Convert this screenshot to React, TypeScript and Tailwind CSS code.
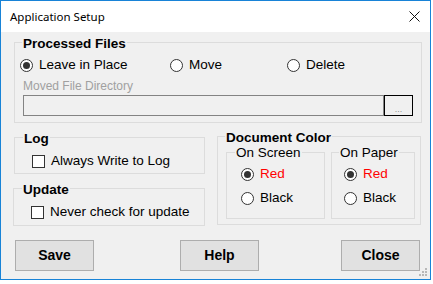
import React from "react";

function Radio({ label, checked, red }: { label: string; checked?: boolean; red?: boolean }) {
  return (
    <div className="flex items-center h-[16px] gap-[6px]">
      <span className="w-[13px] h-[13px] rounded-full border border-[#333333] bg-white flex items-center justify-center">
        {checked && <span className="w-[7px] h-[7px] rounded-full bg-[#333333]" />}
      </span>
      <span className={red ? "text-[#ff0000]" : "text-black"}>{label}</span>
    </div>
  );
}

function Check({ label }: { label: string }) {
  return (
    <div className="flex items-center h-[15px] gap-[6px]">
      <span className="w-[13px] h-[13px] border border-[#333333] bg-white" />
      <span>{label}</span>
    </div>
  );
}

function App() {
  return (
    <div
      className="w-[431px] h-[280px] border border-[#1883d7] flex flex-col text-[13.5px] text-black"
      style={{ fontFamily: '"Liberation Sans", Arial, sans-serif' }}
    >
      <div className="h-[31px] bg-white flex items-center justify-between pl-[9px] pr-[10px]">
        <span className="text-[11.5px]" style={{ fontFamily: '"Noto Sans", sans-serif' }}>
          Application Setup
        </span>
        <svg width="11" height="11" viewBox="0 0 11 11">
          <path d="M0.5 0.5 L10.5 10.5 M10.5 0.5 L0.5 10.5" stroke="#111" strokeWidth="1" />
        </svg>
      </div>

      <div className="h-[247px] bg-[#f0f0f0] relative flex flex-col pl-[13px] pr-[8px]">
        <fieldset className="mt-[2px] w-[408px] border border-[#dcdcdc]">
          <legend className="ml-[7px] px-[1px] pt-[3px] leading-[14px] font-bold">Processed Files</legend>
          <div className="flex flex-col pl-[5px] pb-[6px]">
            <div className="flex mt-[6px]">
              <div className="w-[150px]">
                <Radio label="Leave in Place" checked />
              </div>
              <div className="w-[117px]">
                <Radio label="Move" />
              </div>
              <Radio label="Delete" />
            </div>
            <div className="ml-[3px] mt-[6px] text-[12px] leading-[14px] text-[#a0a0a0]">Moved File Directory</div>
            <div className="flex ml-[3px] mt-[2px]">
              <div className="w-[361px] h-[21px] border border-[#838383] bg-[#f0f0f0]" />
              <div className="w-[29px] h-[21px] border border-black bg-[#f0f0f0] flex items-end justify-center text-[9px] leading-[12px] text-[#909090]">
                ...
              </div>
            </div>
          </div>
        </fieldset>

        <div className="flex items-start">
          <div className="flex flex-col w-[191px]">
            <fieldset className="mt-[6px] border border-[#dcdcdc]">
              <legend className="ml-[8px] px-[1px] pt-[3px] leading-[14px] font-bold">Log</legend>
              <div className="pl-[17px] mt-[8px] pb-[4px]">
                <Check label="Always Write to Log" />
              </div>
            </fieldset>
            <fieldset className="mt-[6px] -ml-px border border-[#dcdcdc]">
              <legend className="ml-[8px] px-[1px] pt-[3px] leading-[14px] font-bold">Update</legend>
              <div className="pl-[17px] mt-[8px] pb-[5px]">
                <Check label="Never check for update" />
              </div>
            </fieldset>
          </div>

          <fieldset className="mt-[5px] ml-[12px] w-[204px] border border-[#dcdcdc]">
            <legend className="ml-[7px] px-[1px] pt-[3px] leading-[14px] font-bold">Document Color</legend>
            <div className="flex pl-[8px] pr-[5px] pb-[5px] gap-[6px]">
              <fieldset className="w-[99px] border border-[#dcdcdc]">
                <legend className="ml-[8px] px-[1px] pt-[1px] leading-[14px]">On Screen</legend>
                <div className="flex flex-col pl-[14px] mt-[6px] gap-[8px] pb-[12px]">
                  <Radio label="Red" checked red />
                  <Radio label="Black" />
                </div>
              </fieldset>
              <fieldset className="w-[84px] border border-[#dcdcdc]">
                <legend className="ml-[7px] px-[1px] pt-[1px] leading-[14px]">On Paper</legend>
                <div className="flex flex-col pl-[12px] mt-[6px] gap-[8px] pb-[12px]">
                  <Radio label="Red" checked red />
                  <Radio label="Black" />
                </div>
              </fieldset>
            </div>
          </fieldset>
        </div>

        <div className="flex mt-[14px] pl-[1px] text-[14px] font-bold">
          <button className="w-[79px] h-[31px] border border-[#adadad] bg-[#e1e1e1]">Save</button>
          <button className="ml-[86px] w-[79px] h-[31px] border border-[#adadad] bg-[#e1e1e1]">Help</button>
          <button className="ml-[82px] w-[79px] h-[31px] border border-[#adadad] bg-[#e1e1e1]">Close</button>
        </div>

        <svg className="absolute right-[2px] bottom-[2px]" width="10" height="10" viewBox="0 0 10 10">
          <rect x="7" y="1" width="2" height="2" fill="#b8b8b8" />
          <rect x="4" y="4" width="2" height="2" fill="#b8b8b8" />
          <rect x="7" y="4" width="2" height="2" fill="#b8b8b8" />
          <rect x="1" y="7" width="2" height="2" fill="#b8b8b8" />
          <rect x="4" y="7" width="2" height="2" fill="#b8b8b8" />
          <rect x="7" y="7" width="2" height="2" fill="#b8b8b8" />
        </svg>
      </div>
    </div>
  );
}

export default App;
